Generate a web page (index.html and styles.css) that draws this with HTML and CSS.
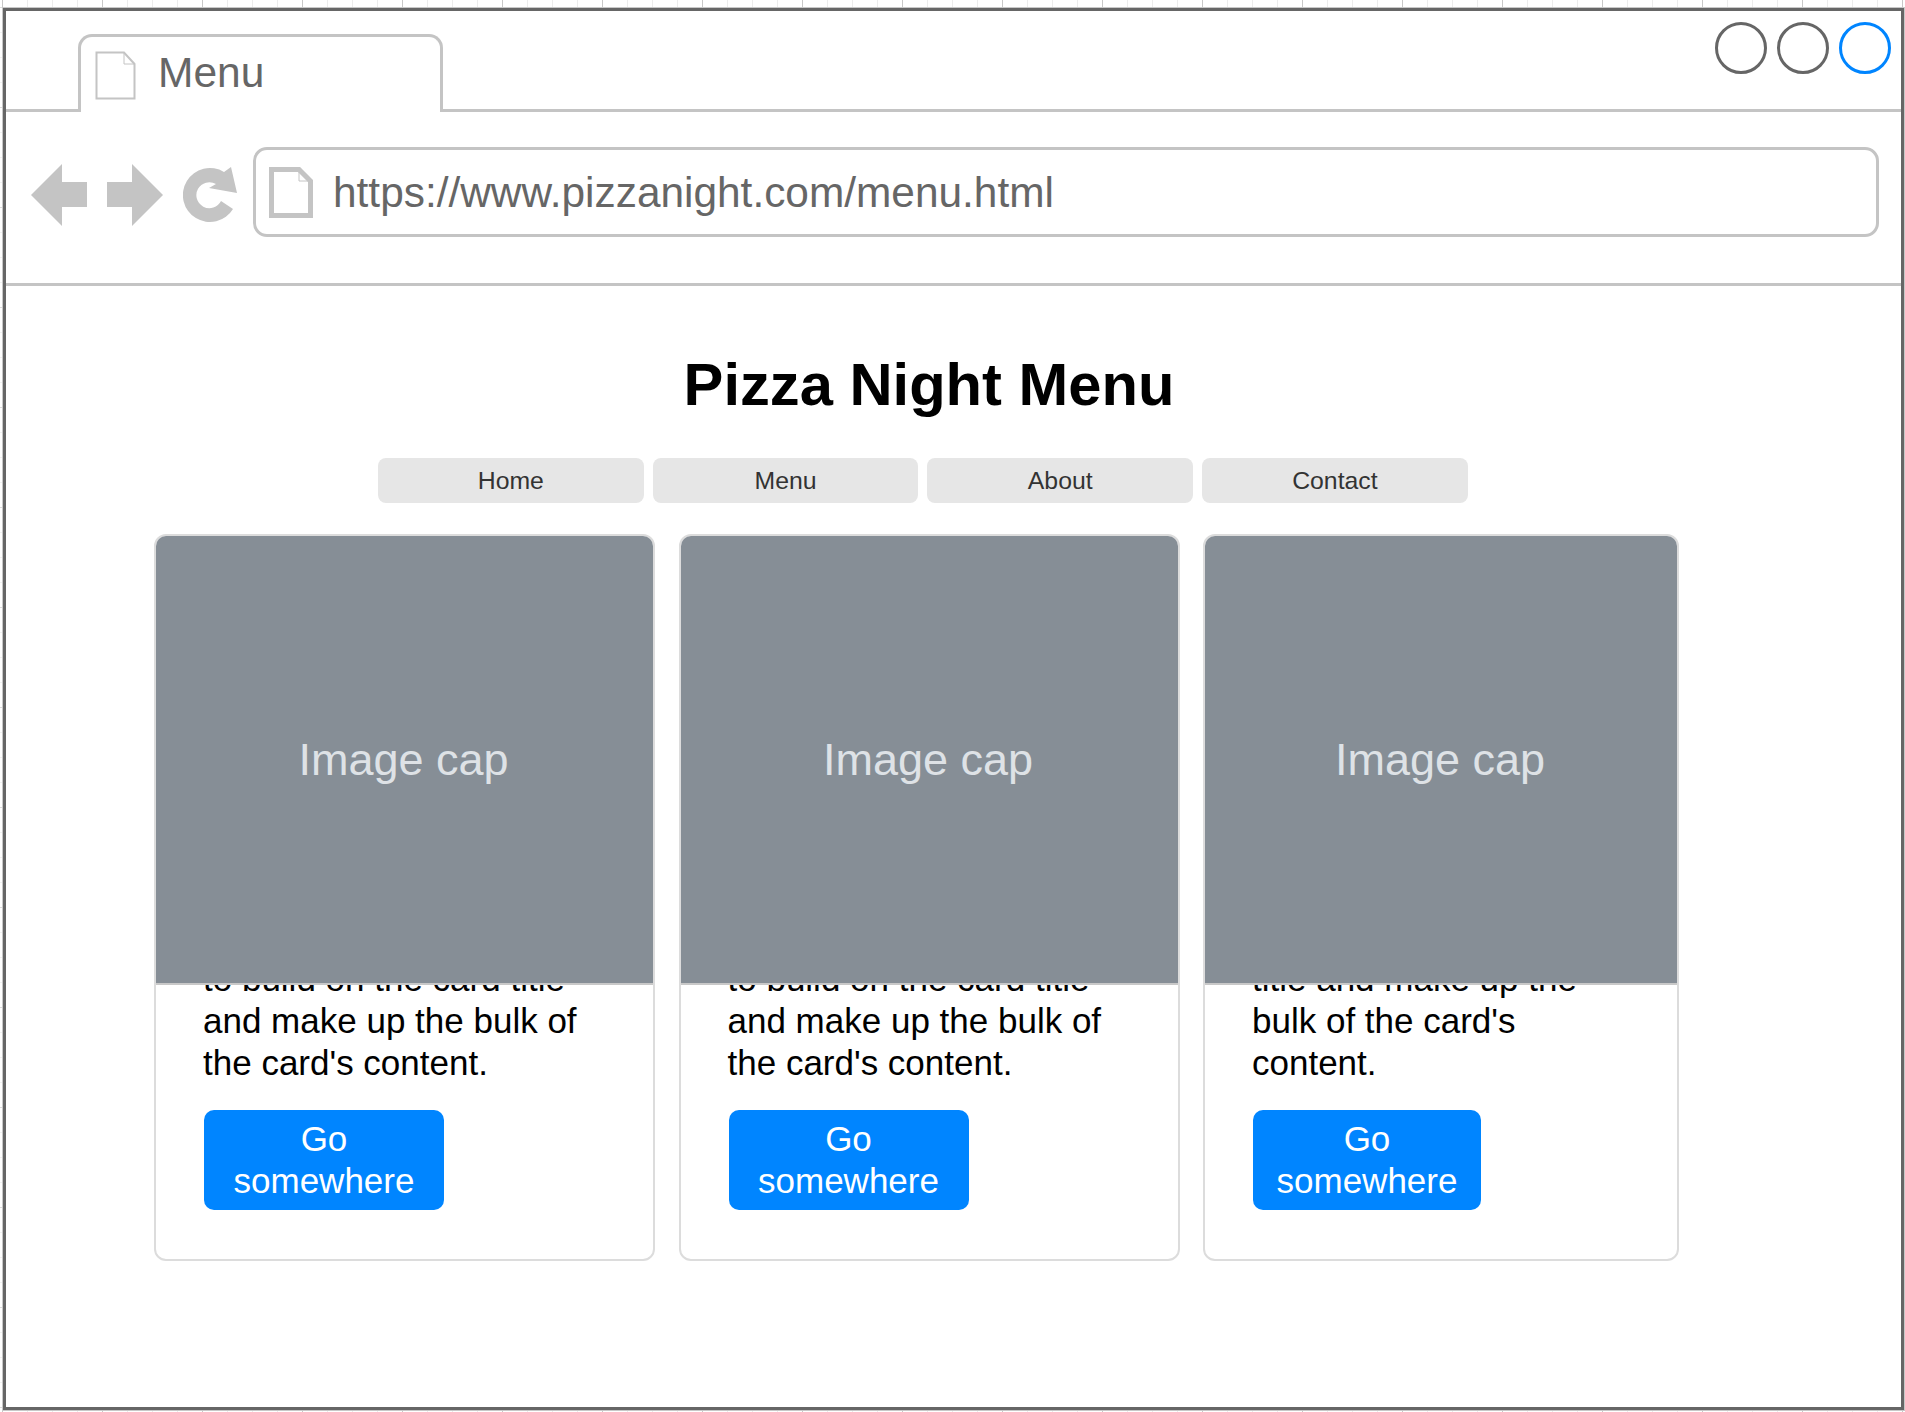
FILE: index.html
```html
<!DOCTYPE html>
<html lang="en">
<head>
  <meta charset="UTF-8">
  <title>Pizza Night Menu</title>
  <link rel="stylesheet" href="styles.css">
</head>
<body>
  <div class="window">
    <div class="tab-bar">
      <div class="tab">
        <svg class="page-icon" width="41" height="49" viewBox="0 0 41 49">
          <path d="M1.5 1.5H29L39.5 13V47.5H1.5Z" fill="#fff" stroke="#c4c4c4" stroke-width="2"/>
          <path d="M29 1.5V13H39.5" fill="none" stroke="#c4c4c4" stroke-width="1"/>
        </svg>
        <span>Menu</span>
      </div>
      <div class="circles">
        <span class="circle"></span>
        <span class="circle"></span>
        <span class="circle active"></span>
      </div>
    </div>

    <div class="address-row">
      <svg class="nav-icon" width="134" height="64" viewBox="0 0 134 64">
        <path d="M1 32L32 1V19H57V44H32V63Z" fill="#c4c4c4"/>
        <path d="M133 32L102 1V19H77V44H102V63Z" fill="#c4c4c4"/>
      </svg>
      <svg class="reload-icon" width="56" height="58" viewBox="0 0 56 58">
        <path d="M41 5A27 27 0 1 0 50 42L38 34A13 13 0 1 1 33 17L26 21L54 26L48 0Z" fill="#c4c4c4"/>
      </svg>
      <div class="address-bar">
        <svg class="url-icon" width="44" height="51" viewBox="0 0 44 51">
          <path d="M2.5 2.5H30L41.5 14V48.5H2.5Z" fill="#fff" stroke="#c4c4c4" stroke-width="5"/>
          <path d="M30 3V14H41" fill="none" stroke="#c4c4c4" stroke-width="1"/>
        </svg>
        <span>https://www.pizzanight.com/menu.html</span>
      </div>
    </div>

    <main class="content">
      <h1>Pizza Night Menu</h1>
      <nav class="menu">
        <a href="#">Home</a>
        <a href="#">Menu</a>
        <a href="#">About</a>
        <a href="#">Contact</a>
      </nav>
      <div class="cards">
        <div class="card">
          <div class="card-img">Image cap</div>
          <div class="card-body">
            <p>Some quick example text to build on the card title and make up the bulk of the card's content.</p>
            <a class="btn" href="#">Go somewhere</a>
          </div>
        </div>
        <div class="card">
          <div class="card-img">Image cap</div>
          <div class="card-body">
            <p>Some quick example text to build on the card title and make up the bulk of the card's content.</p>
            <a class="btn" href="#">Go somewhere</a>
          </div>
        </div>
        <div class="card card-narrow">
          <div class="card-img">Image cap</div>
          <div class="card-body">
            <p>Some quick example text to build on the card title and make up the bulk of the card's content.</p>
            <a class="btn" href="#">Go somewhere</a>
          </div>
        </div>
      </div>
    </main>
  </div>
</body>
</html>
```

FILE: styles.css
```css
* {
  box-sizing: border-box;
}
html, body {
  height: 100%;
}
body {
  margin: 0;
  padding: 8px 1px 2px 3px;
  font-family: "Liberation Sans", Arial, sans-serif;
  background-color: #fff;
  background-image:
    linear-gradient(to right, #c8c8c8 1px, transparent 1px),
    linear-gradient(to bottom, #dcdcdc 1px, transparent 1px),
    linear-gradient(to right, #ececec 1px, transparent 1px),
    linear-gradient(to bottom, #f2f2f2 1px, transparent 1px);
  background-size: 100px 100px, 100px 100px, 25px 25px, 25px 25px;
  background-position: 2px 7px;
}
.window {
  height: 100%;
  background: #fff;
  border: 3px solid #666;
  outline: 1px solid #c8c8c8;
}
.tab-bar {
  height: 101px;
  padding: 0 0 0 72px;
  display: flex;
  justify-content: space-between;
  border-bottom: 3px solid #c4c4c4;
}
.tab {
  width: 365px;
  height: 78px;
  margin-top: 23px;
  padding: 0 0 0 14px;
  display: flex;
  align-items: flex-start;
  gap: 22px;
  background: #fff;
  border: 3px solid #c4c4c4;
  border-bottom: none;
  border-radius: 14px 14px 0 0;
  font-size: 42.5px;
  color: #666;
}
.tab .page-icon {
  margin-top: 14px;
}
.tab span {
  margin-top: 12px;
}
.circles {
  display: flex;
  gap: 10px;
  padding: 11px 10px 0 0;
}
.circle {
  width: 52px;
  height: 52px;
  border: 3px solid #666;
  border-radius: 50%;
}
.circle.active {
  border-color: #0085ff;
}
.address-row {
  height: 174px;
  padding: 35px 22px 0 24px;
  display: flex;
  align-items: flex-start;
  border-bottom: 3px solid #c4c4c4;
}
.nav-icon {
  margin-top: 16px;
  flex: none;
}
.reload-icon {
  margin: 20px 0 0 19px;
  flex: none;
}
.address-bar {
  flex: 1;
  height: 90px;
  margin-left: 14px;
  padding: 0 0 0 13px;
  display: flex;
  align-items: center;
  gap: 20px;
  border: 3px solid #c4c4c4;
  border-radius: 14px;
  font-size: 42.4px;
  color: #666;
}
.address-bar span {
  padding-top: 2px;
}
.content {
  padding: 0 0 0 148px;
}
h1 {
  width: 1550px;
  margin: 0;
  padding-top: 63px;
  font-size: 59.7px;
  line-height: 72px;
  text-align: center;
  color: #000;
}
.menu {
  margin: 37px 0 0 224px;
  display: flex;
  gap: 9px;
}
.menu a {
  width: 265.7px;
  height: 45px;
  display: flex;
  align-items: center;
  justify-content: center;
  background: #e6e6e6;
  border-radius: 8px;
  font-size: 24.8px;
  color: #333;
  text-decoration: none;
}
.cards {
  margin-top: 31px;
  display: flex;
  gap: 23.5px;
}
.card {
  position: relative;
  width: 501px;
  height: 727px;
  display: flex;
  flex-direction: column;
  justify-content: flex-end;
  border: 2px solid #dcdcdc;
  border-radius: 12px;
  background: #fff;
  overflow: hidden;
}
.card-narrow {
  width: 476px;
}
/* sits over the top of the text, the text is cut off under it */
.card-img {
  position: absolute;
  top: 0;
  left: 0;
  right: 0;
  height: 449px;
  padding-right: 2px;
  display: flex;
  align-items: center;
  justify-content: center;
  background: #868e96;
  border-bottom: 2px solid #c8c8c8;
  font-size: 45px;
  color: #dee2e6;
}
.card-body {
  flex: none;
  padding: 0 48px 49px;
}
.card-body p {
  margin: 0 -1px 26px -1px;
  font-size: 35px;
  line-height: 42px;
  color: #000;
}
.btn {
  display: block;
  width: 240px;
  padding: 8px 16px;
  background: #0085ff;
  border-radius: 10px;
  font-size: 35px;
  line-height: 42px;
  text-align: center;
  color: #fff;
  text-decoration: none;
}
.card-narrow .btn {
  width: 228px;
}
```
